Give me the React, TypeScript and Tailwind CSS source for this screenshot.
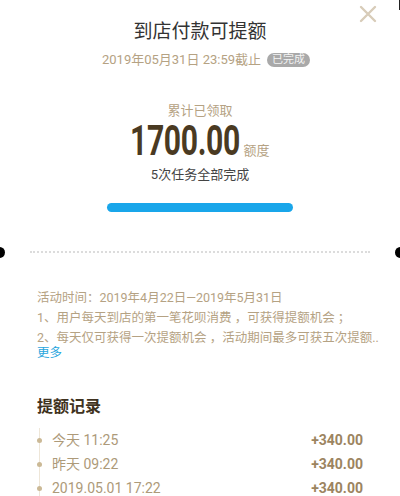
import React from 'react';

const records = [
  { time: '今天 11:25', amount: '+340.00' },
  { time: '昨天 09:22', amount: '+340.00' },
  { time: '2019.05.01 17:22', amount: '+340.00' },
];

export default function App() {
  return (
    <div
      className="relative w-[400px] h-[496px] overflow-hidden bg-white"
      style={{ fontFamily: 'Roboto, "Noto Sans CJK SC", sans-serif' }}
    >
      {/* close */}
      <button className="absolute right-[23px] top-[5px] text-[#d8ccb9]" aria-label="Close">
        <svg width="18" height="18" viewBox="0 0 18 18" fill="none" stroke="currentColor" strokeWidth="2.4" strokeLinecap="round">
          <path d="M2 2l14 14M16 2L2 16" />
        </svg>
      </button>
      <div className="absolute right-0 top-0 h-[10px] w-[1px] bg-[#222]" />

      {/* header */}
      <div className="flex flex-col items-center pt-[19px]">
        <h1 className="text-[19px] leading-[26px] text-[#333]">到店付款可提额</h1>
        <div className="mt-[6px] ml-[12px] flex items-center gap-[6px] text-[13px] leading-[18px] text-[#b5a283]">
          <span>2019年05月31日 23:59截止</span>
          <span className="rounded-full bg-[#a9a9a9] px-[5px] text-[11px] leading-[14px] text-[#f4f4f4]">已完成</span>
        </div>

        <div className="mt-[33px] text-[13px] leading-[18px] text-[#b5a283]">累计已领取</div>
        <div className="flex items-end">
          <span className="inline-block w-[111px] text-[43px] font-bold leading-[40px] text-[#4a3a22]">
            <span className="inline-block origin-left scale-x-[0.7] tracking-[-0.5px] whitespace-nowrap">1700.00</span>
          </span>
          <span className="ml-[2px] text-[13px] leading-[18px] text-[#b5a283]">额度</span>
        </div>
        <div className="mt-[6px] text-[13px] leading-[18px] text-[#444]">5次任务全部完成</div>

        <div className="mt-[19px] h-[9px] w-[186px] rounded-full bg-[#19a6ea]" />
      </div>

      {/* divider */}
      <div className="relative mt-[39px] flex items-center">
        <div className="absolute left-[-6px] h-[11px] w-[11px] rounded-full bg-black" />
        <div className="mx-[30px] w-full border-t-2 border-dotted border-[#dcdcdc]" />
        <div className="absolute right-[-6px] h-[11px] w-[11px] rounded-full bg-black" />
      </div>

      {/* rules */}
      <div className="mt-[35px] px-[37px] text-[12.5px] leading-[20px] text-[#b5a283] whitespace-nowrap">
        <p>活动时间：2019年4月22日—2019年5月31日</p>
        <p>1、用户每天到店的第一笔花呗消费 ，可获得提额机会 ；</p>
        <p>2、每天仅可获得一次提额机会 ，活动期间最多可获五次提额..</p>
        <p className="-mt-[4px] leading-[18px] text-[#29a6dd]">更多</p>
      </div>

      {/* records */}
      <div className="mt-[34px] px-[37px]">
        <h2 className="text-[16px] font-bold leading-[22px] text-[#3f3220]">提额记录</h2>
        <div className="relative mt-[10px]">
          <div className="absolute left-[2px] top-[0px] bottom-[-20px] w-[1px] bg-[#eee6d8]" />
          {records.map((r) => (
            <div key={r.time} className="relative flex h-[24px] items-center justify-between">
              <div className="flex items-center">
                <span className="h-[5px] w-[5px] rounded-full bg-[#cbb996]" />
                <span className="ml-[10px] text-[14px] text-[#ad9a79]">{r.time}</span>
              </div>
              <span className="text-[14px] font-bold text-[#9c8460]">{r.amount}</span>
            </div>
          ))}
        </div>
      </div>
    </div>
  );
}
